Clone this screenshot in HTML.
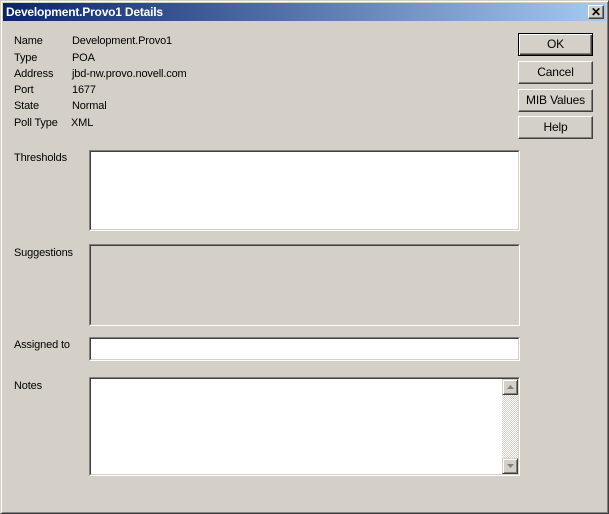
<!DOCTYPE html>
<html><head><style>
*{margin:0;padding:0;box-sizing:border-box}
body{width:609px;height:514px;background:#d4d0c8;font-family:"Liberation Sans",Arial,sans-serif;font-size:11px;letter-spacing:-0.15px;color:#000;position:relative;overflow:hidden}
.win{position:absolute;left:0;top:0;width:609px;height:514px;border:1px solid;border-color:#d4d0c8 #404040 #404040 #d4d0c8;box-shadow:inset 1px 1px 0 #fff,inset -1px -1px 0 #808080}
.title{position:absolute;left:3px;top:3px;width:603px;height:18px;background:linear-gradient(to right,#0a246a,#a6caf0);color:#fff;font-weight:bold;font-size:12px;letter-spacing:-0.2px;line-height:18px;padding-left:3px}
.x{position:absolute;left:588px;top:5px;width:16px;height:14px;background:#d4d0c8;border:1px solid;border-color:#fff #404040 #404040 #fff;box-shadow:inset -1px -1px 0 #808080;font-size:12px;font-weight:bold;text-align:center;line-height:12px;color:#000}
.t{position:absolute;white-space:nowrap;top:0;margin-top:1px}
.btn{position:absolute;left:518px;width:75px;height:23px;background:#d4d0c8;border:1px solid;border-color:#fff #404040 #404040 #fff;box-shadow:inset -1px -1px 0 #808080;text-align:center;line-height:21px;font-size:12px}
.ok{border:1px solid #000;box-shadow:inset 1px 1px 0 #fff,inset -1px -1px 0 #404040,inset -2px -2px 0 #808080}
.f{position:absolute;left:89px;width:431px;border:1px solid;border-color:#808080 #fff #fff #808080;background:#fff}
.f>div{position:absolute;inset:0;border:1px solid;border-color:#404040 #d4d0c8 #d4d0c8 #404040}
.sb{position:absolute;left:502px;top:379px;width:16px;height:95px;background:repeating-conic-gradient(#fff 0 25%,#d4d0c8 0 50%) 0 0/2px 2px}
.ar{position:absolute;left:0;width:16px;height:16px;background:#d4d0c8;border:1px solid;border-color:#d4d0c8 #404040 #404040 #d4d0c8;box-shadow:inset 1px 1px 0 #fff,inset -1px -1px 0 #808080}
.ar svg{position:absolute;left:3px;top:4px}
</style></head><body>
<div class="win"></div>
<div class="title">Development.Provo1 Details</div>
<div class="x">✕</div>
<div class="t" style="left:14px;top:34px">Name</div><div class="t" style="left:72px;top:34px">Development.Provo1</div>
<div class="t" style="left:14px;top:51px">Type</div><div class="t" style="left:72px;top:51px">POA</div>
<div class="t" style="left:14px;top:67px">Address</div><div class="t" style="left:72px;top:67px">jbd-nw.provo.novell.com</div>
<div class="t" style="left:14px;top:83px">Port</div><div class="t" style="left:72px;top:83px">1677</div>
<div class="t" style="left:14px;top:99px">State</div><div class="t" style="left:72px;top:99px">Normal</div>
<div class="t" style="left:14px;top:116px">Poll Type</div><div class="t" style="left:71px;top:116px">XML</div>
<div class="btn ok" style="top:33px">OK</div>
<div class="btn" style="top:61px">Cancel</div>
<div class="btn" style="top:89px">MIB Values</div>
<div class="btn" style="top:116px">Help</div>
<div class="t" style="left:14px;top:151px">Thresholds</div>
<div class="f" style="top:150px;height:81px"><div></div></div>
<div class="t" style="left:14px;top:246px">Suggestions</div>
<div class="f" style="top:244px;height:82px;background:#d4d0c8"><div></div></div>
<div class="t" style="left:14px;top:338px">Assigned to</div>
<div class="f" style="top:337px;height:24px"><div></div></div>
<div class="t" style="left:14px;top:379px">Notes</div>
<div class="f" style="top:377px;height:99px"><div></div></div>
<div class="sb">
<div class="ar" style="top:0"><svg width="9" height="6"><path d="M1 5h7L4.5 1z" fill="#808080"/></svg></div>
<div class="ar" style="top:79px"><svg width="9" height="6"><path d="M1 1h7L4.5 5z" fill="#808080"/></svg></div>
</div>
</body></html>
